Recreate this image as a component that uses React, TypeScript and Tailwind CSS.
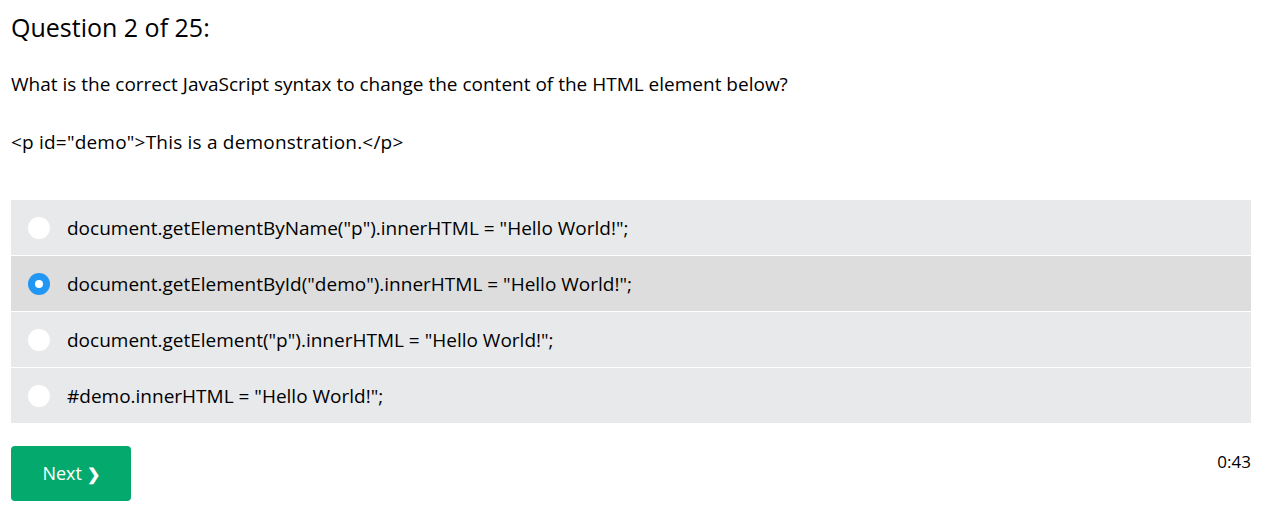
import React from "react";

const options = [
  'document.getElementByName("p").innerHTML = "Hello World!";',
  'document.getElementById("demo").innerHTML = "Hello World!";',
  'document.getElement("p").innerHTML = "Hello World!";',
  '#demo.innerHTML = "Hello World!";',
];

export default function App() {
  const selected = 1;
  return (
    <div
      className="w-[1282px] h-[524px] bg-white text-black px-[11px]"
      style={{ fontFamily: '"Segoe UI", "Open Sans", "Noto Sans", sans-serif' }}
    >
      <h1 className="pt-[11px] text-[25px] leading-[32px] font-normal">Question 2 of 25:</h1>
      <p className="mt-[27px] text-[19px] leading-[28px]">
        What is the correct JavaScript syntax to change the content of the HTML element below?
      </p>
      <p className="mt-[30px] text-[19px] leading-[28px] tracking-[0.2px]">
        &lt;p id=&quot;demo&quot;&gt;This is a demonstration.&lt;/p&gt;
      </p>
      <div className="mt-[44px] w-[1240px] flex flex-col gap-[1px]">
        {options.map((o, i) => (
          <div
            key={i}
            className={`h-[55px] flex items-center pl-[17px] ${i === selected ? "bg-[#dddddd]" : "bg-[#e7e9eb]"}`}
          >
            {i === selected ? (
              <span className="w-[22px] h-[22px] rounded-full bg-[#2196f3] flex items-center justify-center">
                <span className="w-[8px] h-[8px] rounded-full bg-white" />
              </span>
            ) : (
              <span className="w-[22px] h-[22px] rounded-full bg-white" />
            )}
            <span className="ml-[17px] text-[19px] leading-[28px]">{o}</span>
          </div>
        ))}
      </div>
      <div className="mt-[23px] w-[1240px] flex justify-between items-start">
        <button className="w-[120px] h-[55px] rounded-[4px] bg-[#04aa6d] text-white text-[18px] flex items-center justify-center">
          Next&nbsp;<span className="text-[16px] font-bold">❯</span>
        </button>
        <span className="mt-[4px] text-[17px] leading-[24px]">0:43</span>
      </div>
    </div>
  );
}
